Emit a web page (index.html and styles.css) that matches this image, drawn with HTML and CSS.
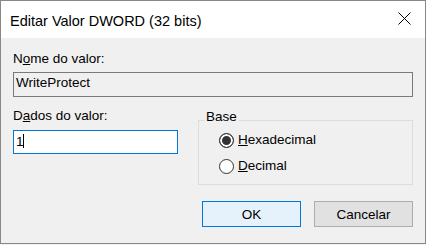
FILE: index.html
```html
<!DOCTYPE html>
<html lang="pt">
<head>
  <meta charset="UTF-8">
  <title>Editar Valor DWORD (32 bits)</title>
  <link rel="stylesheet" href="styles.css">
</head>
<body>
  <div class="dialog">
    <div class="titlebar">
      <span class="title">Editar Valor DWORD (32 bits)</span>
      <svg class="close" width="13" height="13" viewBox="0 0 13 13">
        <path d="M0.5 0.5 L12.5 12.5 M12.5 0.5 L0.5 12.5" stroke="#000" stroke-width="1" fill="none"/>
      </svg>
    </div>
    <div class="content">
      <div class="label">N<u>o</u>me do valor:</div>
      <div class="textbox readonly">WriteProtect</div>
      <div class="row">
        <div class="data-col">
          <div class="label">D<u>a</u>dos do valor:</div>
          <div class="textbox focused">1<span class="caret"></span></div>
        </div>
        <fieldset class="group">
          <legend>Base</legend>
          <div class="radios">
            <div class="radio"><span class="dot checked"></span><span><u>H</u>exadecimal</span></div>
            <div class="radio"><span class="dot"></span><span><u>D</u>ecimal</span></div>
          </div>
        </fieldset>
      </div>
      <div class="buttons">
        <div class="btn default">OK</div>
        <div class="btn">Cancelar</div>
      </div>
    </div>
  </div>
</body>
</html>
```

FILE: styles.css
```css
body {
  margin: 0;
  background: #f0f0f0;
  font-family: "Liberation Sans", Arial, sans-serif;
  font-size: 13.5px;
  color: #000;
}
.dialog {
  width: 426px;
  height: 244px;
  box-sizing: border-box;
  border: 1px solid #888;
  background: #f0f0f0;
}
.titlebar {
  display: flex;
  align-items: center;
  height: 37px;
  box-sizing: border-box;
  padding: 2px 0 0 9px;
  background: #fff;
  font-size: 14.5px;
}
.close {
  margin: 9px 14px 0 auto;
  align-self: flex-start;
}
.content {
  padding: 13px 12px 0;
}
.label {
  line-height: 16px;
  margin-bottom: 5px;
}
.data-col .label {
  margin-bottom: 6px;
}
.textbox {
  box-sizing: border-box;
}
.readonly {
  height: 25px;
  border: 1px solid #7a7a7a;
  background: #f0f0f0;
  line-height: 19px;
  padding: 0 2px 4px;
}
.focused {
  height: 24px;
  border: 1px solid #0078d7;
  background: #fff;
  line-height: 22px;
  padding-left: 2px;
}
.caret {
  display: inline-block;
  width: 1px;
  height: 14px;
  background: #000;
  vertical-align: -2px;
  margin-left: -1px;
}
.row {
  display: flex;
  align-items: flex-start;
  gap: 20px;
  margin-top: 11px;
}
.data-col {
  width: 165px;
}
.group {
  width: 215px;
  min-width: 0;
  box-sizing: border-box;
  margin: 1px 0 0;
  padding: 0 0 10px 5px;
  border: 1px solid #dcdcdc;
}
.group legend {
  padding: 0 2px 7px;
  line-height: 16px;
}
.radios {
  padding-left: 15px;
}
.radio {
  display: flex;
  align-items: center;
  gap: 4px;
  height: 16px;
  line-height: 16px;
}
.radio + .radio {
  margin-top: 10px;
}
.dot {
  width: 15px;
  height: 15px;
  flex-shrink: 0;
  box-sizing: border-box;
  border: 1px solid #333;
  border-radius: 50%;
  background: #fff;
}
.dot.checked {
  background: #333;
  box-shadow: inset 0 0 0 2px #fff;
}
.buttons {
  display: flex;
  justify-content: flex-end;
  gap: 13px;
  margin-top: 16px;
}
.btn {
  width: 99px;
  height: 26px;
  box-sizing: border-box;
  display: flex;
  align-items: center;
  justify-content: center;
  border: 1px solid #adadad;
  background: #e1e1e1;
}
.btn.default {
  border-color: #0078d7;
  background: #e5f1fb;
}
```
